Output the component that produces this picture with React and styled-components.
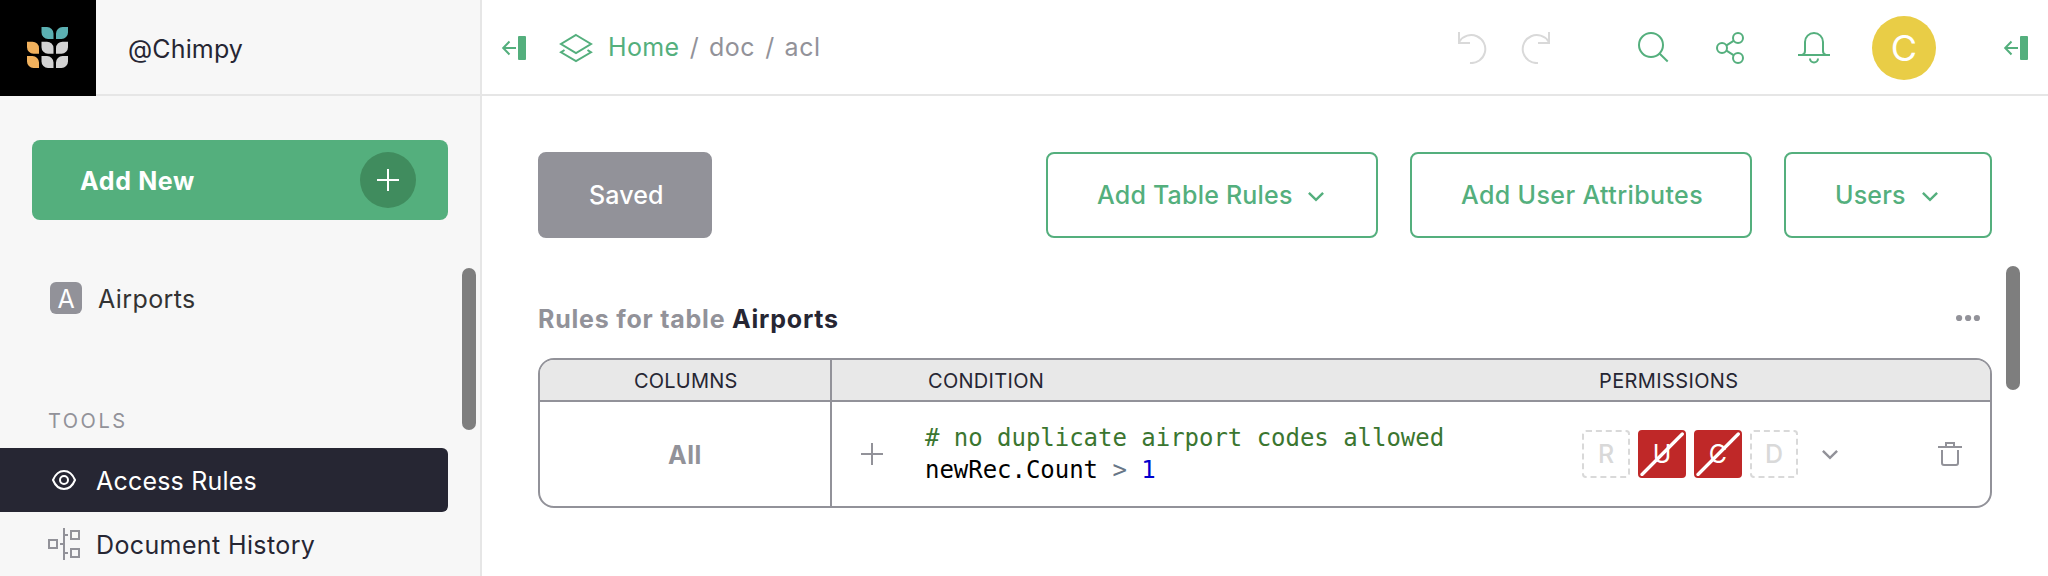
import React from "react";
import styled, { createGlobalStyle } from "styled-components";

const c = {
  green: "#54af7d",
  darkGreen: "#408c5e",
  dark: "#262633",
  slate: "#929299",
  border: "#e6e6e6",
  light: "#d9d9d9",
  side: "#f7f7f7",
  red: "#bf2828",
};

const Global = createGlobalStyle`
  * { box-sizing: border-box; }
  body { margin: 0; background: #fff; overflow: hidden; font-family: Inter, "Liberation Sans", sans-serif; font-size: 25px; color: ${c.dark}; }
`;

const Page = styled.div`
  display: flex;
  width: 2048px;
  height: 576px;
  overflow: hidden;
`;
const Sidebar = styled.aside`
  width: 482px;
  flex: none;
  background: ${c.side};
  border-right: 2px solid ${c.border};
`;
const Main = styled.main`
  flex: 1;
  min-width: 0;
`;
const OrgBar = styled.header`
  display: flex;
  height: 96px;
`;
const Logo = styled.div`
  width: 96px;
  height: 96px;
  background: #000;
  padding: 27px;
`;
const OrgName = styled.div`
  flex: 1;
  display: flex;
  align-items: center;
  padding-left: 32px;
  padding-top: 4px;
  border-bottom: 2px solid ${c.border};
`;
const Text = styled.span`
  display: block;
  white-space: pre;
  padding-top: ${(p) => p.$drop || 0}px;
  font-size: ${(p) => p.$size || 25}px;
  font-weight: ${(p) => p.$weight || 400};
  letter-spacing: ${(p) => p.$ls || 0}px;
  color: ${(p) => p.$color || "inherit"};
`;
const Icon = styled.svg`
  display: block;
  flex: none;
  fill: none;
  stroke: currentColor;
  stroke-width: ${(p) => p.$sw || 2};
`;
const SideBody = styled.div`
  display: flex;
  height: 480px;
`;
const SideContent = styled.div`
  width: 448px;
  padding-top: 44px;
`;
const Track = styled.div`
  display: flex;
  flex-direction: column;
  padding: ${(p) => p.$pad};
`;
const Thumb = styled.div`
  width: 14px;
  height: ${(p) => p.$h}px;
  border-radius: 7px;
  background: #7e7e7e;
`;
const AddNew = styled.div`
  display: flex;
  align-items: center;
  justify-content: space-between;
  height: 80px;
  margin-left: 32px;
  padding: 0 32px 0 48px;
  border-radius: 8px;
  background: ${c.green};
  color: #fff;
`;
const PlusCircle = styled.div`
  display: flex;
  align-items: center;
  justify-content: center;
  width: 56px;
  height: 56px;
  border-radius: 50%;
  background: ${c.darkGreen};
`;
const PageRow = styled.div`
  display: flex;
  align-items: center;
  height: 64px;
  margin-top: 46px;
  padding-left: 50px;
  gap: 16px;
  color: #333;
`;
const Badge = styled.span`
  display: flex;
  align-items: center;
  justify-content: center;
  width: 32px;
  height: 32px;
  border-radius: 6px;
  background: ${c.slate};
  color: #fff;
`;
const SectionTitle = styled.div`
  height: 39px;
  margin-top: 79px;
  padding: 0 0 0 48px;
  line-height: 25px;
  color: ${c.slate};
`;
const ToolRow = styled.div`
  display: flex;
  align-items: center;
  height: 64px;
  padding-left: 48px;
  gap: 16px;
  border-radius: 0 6px 6px 0;
  background: ${(p) => (p.$active ? c.dark : "transparent")};
  color: ${(p) => (p.$active ? "#fff" : c.dark)};
`;
const IconTint = styled.span`
  color: ${(p) => p.$c};
`;
const TopBar = styled.header`
  display: flex;
  align-items: center;
  height: 96px;
  padding: 2px 18px 0 18px;
  border-bottom: 2px solid ${c.border};
  color: ${c.green};
`;
const Crumbs = styled.nav`
  display: flex;
  align-items: center;
  margin-left: 30px;
  color: ${c.slate};
`;
const CrumbText = styled.div`
  display: flex;
  gap: 3px;
  padding-bottom: 2px;
`;
const Actions = styled.div`
  display: flex;
  align-items: center;
  margin-left: auto;
`;
const Slot = styled.div`
  width: ${(p) => p.$w}px;
  color: ${(p) => p.$c || "inherit"};
`;
const Avatar = styled.div`
  display: flex;
  align-items: center;
  justify-content: center;
  width: 64px;
  height: 64px;
  margin-right: 66px;
  border-radius: 50%;
  background: #e9cd46;
  color: #fff;
`;
const Body = styled.div`
  display: flex;
  height: 480px;
`;
const Content = styled.section`
  width: 1510px;
  padding: 56px 0 0 56px;
`;
const Toolbar = styled.div`
  display: flex;
  gap: 32px;
  height: 86px;
`;
const Button = styled.div`
  display: flex;
  align-items: center;
  justify-content: space-between;
  width: ${(p) => p.$w}px;
  padding: 0 52px 0 49px;
  border: 2px solid ${(p) => (p.$filled ? c.slate : c.green)};
  border-radius: 8px;
  background: ${(p) => (p.$filled ? c.slate : "#fff")};
  color: ${(p) => (p.$filled ? "#fff" : c.green)};
  margin-right: ${(p) => (p.$filled ? "auto" : 0)};
`;
const Caret = styled.span`
  padding-top: 3px;
`;
const TableHead = styled.div`
  display: flex;
  align-items: center;
  height: 40px;
  margin: 61px 12px 19px 0;
`;
const DotsBox = styled.div`
  margin-left: auto;
  padding-bottom: 2px;
  color: ${c.slate};
`;
const Table = styled.div`
  display: grid;
  grid-template-columns: 292px 1fr;
  grid-template-rows: 42px 104px;
  height: 150px;
  border: 2px solid ${c.slate};
  border-radius: 16px;
  overflow: hidden;
`;
const HeadCell = styled.div`
  display: flex;
  align-items: center;
  background: #e8e8e8;
  border-bottom: 2px solid ${c.slate};
  border-right: ${(p) => (p.$first ? `2px solid ${c.slate}` : 0)};
  padding-left: ${(p) => (p.$first ? 94 : 96)}px;
  padding-top: 2px;
`;
const HeadLabel = styled.div`
  width: 671px;
`;
const ColumnCell = styled.div`
  display: flex;
  align-items: center;
  justify-content: center;
  border-right: 2px solid ${c.slate};
  color: ${c.slate};
`;
const RuleCell = styled.div`
  display: flex;
  align-items: center;
  padding-left: 24px;
  color: ${c.slate};
`;
const Code = styled.pre`
  flex: none;
  margin: 0;
  width: 694px;
  padding-left: 37px;
  font: 24px/32px "DejaVu Sans Mono", "Liberation Mono", monospace;
  letter-spacing: -0.03px;
  color: #000;
`;
const Tok = styled.span`
  color: ${(p) => p.$c};
`;
const Perms = styled.div`
  display: flex;
  gap: 8px;
`;
const Perm = styled.div`
  display: grid;
  place-items: center;
  width: 48px;
  height: 48px;
  border-radius: 4px;
  border: 2px ${(p) => (p.$deny ? `solid ${c.red}` : `dashed ${c.light}`)};
  background: ${(p) => (p.$deny ? c.red : "#fff")};
  color: ${(p) => (p.$deny ? "#fff" : c.light)};
  & > * { grid-area: 1 / 1; }
`;
const RowIcon = styled.div`
  margin-left: ${(p) => p.$ml}px;
  padding-top: ${(p) => p.$drop || 0}px;
`;

const LEAF_A = "M0 0H5.500A6.500 6.500 0 0 1 12 6.500V12H6.500A6.500 6.500 0 0 1 0 5.500Z";
const LEAF_B = "M12 0H6.500A6.500 6.500 0 0 0 0 6.500V12H5.500A6.500 6.500 0 0 0 12 5.500Z";
const leaves = [
  [14.5, 0, LEAF_A, "#5bb0b2"], [29, 0, LEAF_B, "#5bb0b2"],
  [0, 14.7, LEAF_A, "#f1b15d"], [14.5, 14.7, LEAF_A, "#d3d3d3"], [29, 14.7, LEAF_B, "#d3d3d3"],
  [0, 29, LEAF_A, "#f1b15d"], [14.5, 29, LEAF_A, "#d3d3d3"], [29, 29, LEAF_B, "#d3d3d3"],
];

const Leaves = () => (
  <Icon width="41" height="41" viewBox="0 0 41 41">
    {leaves.map(([x, y, d, f], i) => (
      <path key={i} d={d} fill={f} stroke="none" transform={`translate(${x} ${y})`} />
    ))}
  </Icon>
);
const Collapse = () => (
  <Icon width="28" height="24" viewBox="0 0 28 24">
    <rect x="18" width="8" height="24" rx="1" fill="currentColor" stroke="none" />
    <path d="M9.500 5.500 3.200 12l6.300 6.500M3.200 12H16" />
  </Icon>
);
const Plus = () => (
  <Icon width="32" height="32" viewBox="0 0 32 32"><path d="M16 5v22M5 16h22" /></Icon>
);
const Chevron = () => (
  <Icon width="16" height="12" viewBox="0 0 16 12" $sw={2.4}>
    <path d="M.9 1.800 8 8.900l7.100-7.100" />
  </Icon>
);
const Undo = () => (
  <Icon width="32" height="32" viewBox="0 0 32 32">
    <path d="M3 0v11h11M3.500 9.500A14 14 0 1 1 14 31" />
  </Icon>
);
const Redo = () => (
  <Icon width="32" height="32" viewBox="0 0 32 32">
    <path d="M29 0v11H18M28.500 9.500A14 14 0 1 0 18 31" />
  </Icon>
);

export default function App() {
  return (
    <Page>
      <Global />
      <Sidebar>
        <OrgBar>
          <Logo><Leaves /></Logo>
          <OrgName><Text $ls={0.15}>@Chimpy</Text></OrgName>
        </OrgBar>
        <SideBody>
          <SideContent>
            <AddNew>
              <Text $drop={2} $weight={700} $ls={0.65}>Add New</Text>
              <PlusCircle><Plus /></PlusCircle>
            </AddNew>
            <PageRow>
              <Badge><Text $drop={2}>A</Text></Badge>
              <Text $drop={2} $ls={0.4}>Airports</Text>
            </PageRow>
            <SectionTitle><Text $size={20} $ls={2.5}>TOOLS</Text></SectionTitle>
            <ToolRow $active>
              <Icon width="32" height="32" viewBox="0 0 32 32">
                <path d="M5 16C7.500 10 11.500 7 16 7s8.500 3 11 9c-2.500 6-6.500 9-11 9S7.500 22 5 16Z" />
                <circle cx="16" cy="16" r="4" />
              </Icon>
              <Text $drop={2} $ls={0.2}>Access Rules</Text>
            </ToolRow>
            <ToolRow>
              <IconTint $c={c.slate}>
                <Icon width="32" height="32" viewBox="0 0 32 32">
                  <path d="M1 12h8v8H1zM23 3h8v8h-8zM23 21h8v8h-8zM16 0v32M12 16h4M16 7h4M16 25h4" />
                </Icon>
              </IconTint>
              <Text $drop={2} $ls={0.38}>Document History</Text>
            </ToolRow>
          </SideContent>
          <Track $pad="172px 0 0 14px"><Thumb $h={162} /></Track>
        </SideBody>
      </Sidebar>
      <Main>
        <TopBar>
          <Collapse />
          <Crumbs>
            <Slot $w={50}>
              <IconTint $c={c.green}>
                <Icon width="36" height="32" viewBox="0 0 36 32">
                  <path d="M18 3 33 12 18 21 3 12ZM6.500 18 3 20.300 18 29l15-8.700L29.500 18" />
                </Icon>
              </IconTint>
            </Slot>
            <CrumbText>
              <Text $ls={0.35} $color={c.green}>Home</Text>
              <Text $ls={0.15}>{" / "}</Text>
              <Text $ls={0.5}>doc</Text>
              <Text $ls={0.15}>{" / "}</Text>
              <Text $ls={0.5}>acl</Text>
            </CrumbText>
          </Crumbs>
          <Actions>
            <Slot $w={64} $c={c.light}><Undo /></Slot>
            <Slot $w={118} $c={c.light}><Redo /></Slot>
            <Slot $w={76}>
              <Icon width="32" height="32" viewBox="0 0 32 32">
                <circle cx="13" cy="13" r="12" /><path d="m21.500 21.500 8.200 8" />
              </Icon>
            </Slot>
            <Slot $w={84}>
              <Icon width="32" height="32" viewBox="0 0 32 32">
                <circle cx="8" cy="16" r="5" /><circle cx="24" cy="6" r="5" /><circle cx="24" cy="26" r="5" />
                <path d="m12.500 13.300 7-4.400M12.500 18.700l7 4.400" />
              </Icon>
            </Slot>
            <Slot $w={74}>
              <Icon width="32" height="32" viewBox="0 0 32 32">
                <path d="M0 23h32M4 23q3-1 3-4V10a9 9 0 0 1 18 0v9q0 3 3 4M12 26.500a4 4 0 0 0 8 0" />
              </Icon>
            </Slot>
            <Avatar><Text $size={36}>C</Text></Avatar>
            <Collapse />
          </Actions>
        </TopBar>
        <Body>
          <Content>
            <Toolbar>
              <Button $filled $w={174}><Text $weight={500} $ls={0.1}>Saved</Text></Button>
              <Button $w={332}><Text $weight={500} $ls={0.2}>Add Table Rules</Text><Caret><Chevron /></Caret></Button>
              <Button $w={342}><Text $weight={500} $ls={0.38}>Add User Attributes</Text></Button>
              <Button $w={208}><Text $weight={500} $ls={0.2}>Users</Text><Caret><Chevron /></Caret></Button>
            </Toolbar>
            <TableHead>
              <Text $weight={700} $ls={0.78} $color={c.slate}>{"Rules for table "}</Text>
              <Text $weight={700} $ls={0.78}>Airports</Text>
              <DotsBox>
                <Icon width="24" height="8" viewBox="0 0 24 8">
                  <g fill="currentColor" stroke="none">
                    <circle cx="3.100" cy="4" r="3.100" /><circle cx="12.100" cy="4" r="3.100" /><circle cx="20.900" cy="4" r="3.100" />
                  </g>
                </Icon>
              </DotsBox>
            </TableHead>
            <Table>
              <HeadCell $first><Text $size={20} $ls={0.2}>COLUMNS</Text></HeadCell>
              <HeadCell>
                <HeadLabel><Text $size={20} $ls={0.3}>CONDITION</Text></HeadLabel>
                <Text $size={20} $ls={0.38}>PERMISSIONS</Text>
              </HeadCell>
              <ColumnCell><Text $drop={2} $weight={700} $ls={0.6}>All</Text></ColumnCell>
              <RuleCell>
                <Plus />
                <Code>
                  <Tok $c="#3b7630"># no duplicate airport codes allowed</Tok>{"\n"}newRec.Count <Tok $c="#687687">&gt;</Tok> <Tok $c="#0000cd">1</Tok>
                </Code>
                <Perms>
                  {[["R"], ["U", 1], ["C", 1], ["D"]].map(([l, deny]) => (
                    <Perm key={l} $deny={deny}>
                      <Text $weight={deny ? 400 : 500}>{l}</Text>
                      {deny && (
                        <Icon width="44" height="44" viewBox="0 0 44 44" $sw={3.3}>
                          <path d="M2 42.500 42.300 2" strokeLinecap="round" />
                        </Icon>
                      )}
                    </Perm>
                  ))}
                </Perms>
                <RowIcon $ml={24} $drop={2}><Chevron /></RowIcon>
                <RowIcon $ml={96}>
                  <Icon width="32" height="32" viewBox="0 0 32 32">
                    <path d="M4 9h24M12 9V5h8v4M8 12v13q0 2 2 2h12q2 0 2-2V12" />
                  </Icon>
                </RowIcon>
              </RuleCell>
            </Table>
          </Content>
          <Track $pad="170px 0 0 14px"><Thumb $h={124} /></Track>
        </Body>
      </Main>
    </Page>
  );
}
